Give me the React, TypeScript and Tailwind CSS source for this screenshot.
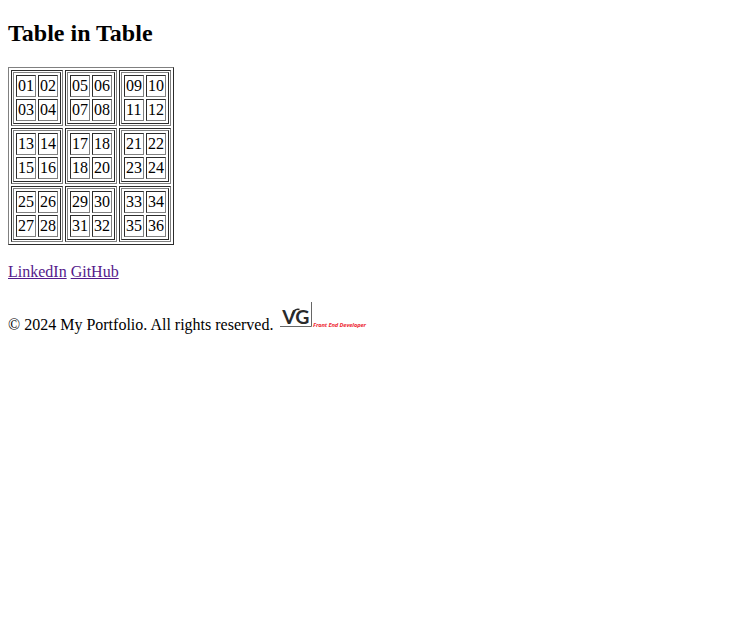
const groups = [
  [["01","02","03","04"],["05","06","07","08"],["09","10","11","12"]],
  [["13","14","15","16"],["17","18","18","20"],["21","22","23","24"]],
  [["25","26","27","28"],["29","30","31","32"],["33","34","35","36"]],
];

const cell = "border border-t-[#2c2c2c] border-l-[#2c2c2c] border-b-[#808080] border-r-[#808080] p-px";
const table = "border-separate border-spacing-[2px] border border-t-[#808080] border-l-[#808080] border-b-[#2c2c2c] border-r-[#2c2c2c]";

function Inner({ values }: { values: string[] }) {
  return (
    <table className={table}>
      <tbody>
        {[0, 2].map((start) => (
          <tr key={start}>
            {values.slice(start, start + 2).map((v) => (
              <td key={v} className={cell}>{v}</td>
            ))}
          </tr>
        ))}
      </tbody>
    </table>
  );
}

function Logo() {
  return (
    <svg width="90" height="26" viewBox="0 0 90 26" className="mb-1 ml-1 block">
      <text y="21.5" fontSize="19.5" fontFamily="Lato" fontWeight="700" fill="#2a2a2a"><tspan x="5.3">V</tspan><tspan x="18.3">G</tspan></text>
      <path d="M15 13C16.5 8.5 18.5 6.5 22.5 7.5" fill="none" stroke="#2a2a2a" strokeWidth="1.5" />
      <path d="M3 24.5H34.5V0" fill="none" stroke="#666" />
      <text x="36" y="24.8" fontSize="5.8" fontFamily="Open Sans" fontWeight="700" fontStyle="italic" fill="#ee2b35" textLength="53">Front End Developer</text>
    </svg>
  );
}

export default function App() {
  return (
    <main className="p-2 pt-5 font-['Liberation_Serif',serif] text-base leading-[18px] text-black">
      <h2 className="mb-5 text-2xl leading-[27px] font-bold">Table in Table</h2>
      <table className={table}>
        <tbody>
          {groups.map((row, i) => (
            <tr key={i}>
              {row.map((values) => (
                <td key={values[0]} className={cell}><Inner values={values} /></td>
              ))}
            </tr>
          ))}
        </tbody>
      </table>
      <p className="mt-[18px] text-[#551a8b]"><a href="#" className="underline">LinkedIn</a> <a href="#" className="underline">GitHub</a></p>
      <footer className="mt-[21px] flex h-8 items-end"><span>© 2024 My Portfolio. All rights reserved.</span><div className="self-start"><Logo /></div></footer>
    </main>
  );
}
